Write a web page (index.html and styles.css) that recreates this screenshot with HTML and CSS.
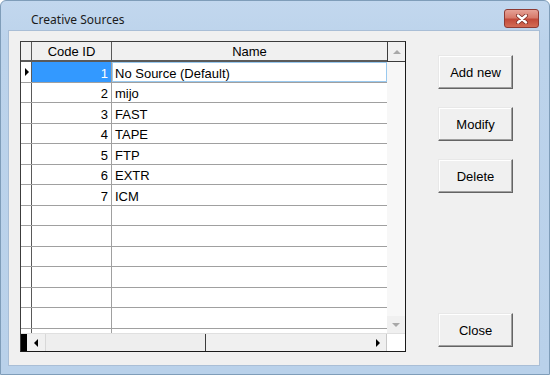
FILE: index.html
```html
<!DOCTYPE html>
<html lang="en">
<head>
    <meta charset="UTF-8">
    <title>Creative Sources</title>
    <link rel="stylesheet" href="styles.css">
</head>
<body>
    <div class="window">
        <div class="titlebar">
            <span class="title">Creative Sources</span>
            <div class="close-x">
                <svg width="14" height="10" viewBox="0 0 14 10">
                    <path d="M3 1.5 L11 8.5 M11 1.5 L3 8.5" stroke="#7a2a22" stroke-width="4" stroke-linecap="round"/>
                    <path d="M3 1.5 L11 8.5 M11 1.5 L3 8.5" stroke="#ffffff" stroke-width="2.4" stroke-linecap="round"/>
                </svg>
            </div>
        </div>
        <div class="client">
            <div class="grid">
                <div class="grid-main">
                    <div class="grid-view">
                        <div class="row header">
                            <div class="sel"></div>
                            <div class="cell code">Code ID</div>
                            <div class="cell name">Name</div>
                        </div>
                        <div class="rows">
                            <div class="row current">
                                <div class="sel"><span class="arrow"></span></div>
                                <div class="cell code">1</div>
                                <div class="cell name">No Source (Default)</div>
                            </div>
                            <div class="row"><div class="sel"></div><div class="cell code">2</div><div class="cell name">mijo</div></div>
                            <div class="row"><div class="sel"></div><div class="cell code">3</div><div class="cell name">FAST</div></div>
                            <div class="row"><div class="sel"></div><div class="cell code">4</div><div class="cell name">TAPE</div></div>
                            <div class="row"><div class="sel"></div><div class="cell code">5</div><div class="cell name">FTP</div></div>
                            <div class="row"><div class="sel"></div><div class="cell code">6</div><div class="cell name">EXTR</div></div>
                            <div class="row"><div class="sel"></div><div class="cell code">7</div><div class="cell name">ICM</div></div>
                            <div class="row"><div class="sel"></div><div class="cell code"></div><div class="cell name"></div></div>
                            <div class="row"><div class="sel"></div><div class="cell code"></div><div class="cell name"></div></div>
                            <div class="row"><div class="sel"></div><div class="cell code"></div><div class="cell name"></div></div>
                            <div class="row"><div class="sel"></div><div class="cell code"></div><div class="cell name"></div></div>
                            <div class="row"><div class="sel"></div><div class="cell code"></div><div class="cell name"></div></div>
                            <div class="row"><div class="sel"></div><div class="cell code"></div><div class="cell name"></div></div>
                            <div class="row"><div class="sel"></div><div class="cell code"></div><div class="cell name"></div></div>
                        </div>
                    </div>
                    <div class="vscroll">
                        <div class="sb-btn up"><span class="tri-up"></span></div>
                        <div class="sb-track"></div>
                        <div class="sb-btn down"><span class="tri-down"></span></div>
                    </div>
                </div>
                <div class="hscroll">
                    <div class="corner-left"></div>
                    <div class="sb-btn left"><span class="tri-left"></span></div>
                    <div class="h-track"><div class="thumb"></div></div>
                    <div class="sb-btn right"><span class="tri-right"></span></div>
                    <div class="corner-right"></div>
                </div>
            </div>
            <div class="actions">
                <button class="button">Add new</button>
                <button class="button">Modify</button>
                <button class="button">Delete</button>
                <button class="button close">Close</button>
            </div>
        </div>
    </div>
</body>
</html>
```

FILE: styles.css
```css
body {
    margin: 0;
    background-color: #ffffff;
    font-family: 'Liberation Sans', Arial, sans-serif;
    font-size: 13px;
    color: #000000;
}
.window {
    width: 550px;
    height: 375px;
    box-sizing: border-box;
    border: 1px solid #7f9db9;
    border-radius: 6px 6px 0 0;
    background: linear-gradient(to bottom, #c2d7ee 0, #bcd3eb 40px, #b9d1ea 100%);
    padding: 0 9px 8px 7px;
    display: flex;
    flex-direction: column;
}
.titlebar {
    height: 31px;
    display: flex;
    align-items: flex-start;
    justify-content: space-between;
    margin-right: 1px;
    margin-left: 23px;
}
.title {
    font-family: 'Noto Sans', 'Open Sans', sans-serif;
    font-size: 12px;
    color: #1b1b1b;
    margin-top: 10px;
}
.close-x {
    width: 33px;
    height: 17px;
    margin-top: 8px;
    border: 1px solid #8e3a33;
    border-radius: 3px;
    background: linear-gradient(to bottom, #e6a297 0, #d77a6b 45%, #c24a3a 55%, #d36c55 100%);
    display: flex;
    align-items: center;
    justify-content: center;
}
.client {
    flex: 1;
    background-color: #f0f0f0;
    border: 1px solid #a9bed6;
    display: flex;
    padding: 10px 0 0 11px;
}
.grid {
    width: 386px;
    height: 311px;
    box-sizing: border-box;
    border: 1px solid #1a1a1a;
    border-top-color: #3c3c3c;
    border-left-color: #3c3c3c;
    display: flex;
    flex-direction: column;
    background-color: #ffffff;
}
.grid-main {
    flex: 1;
    display: flex;
    min-height: 0;
}
.grid-view {
    width: 366px;
    display: flex;
    flex-direction: column;
    overflow: hidden;
}
.rows {
    flex: 1;
    overflow: hidden;
}
.row {
    display: flex;
    height: 20.5px;
    box-sizing: border-box;
    border-bottom: 1px solid #a0a0a0;
}
.row .sel {
    width: 11px;
    box-sizing: border-box;
    border-right: 1px solid #5a5a5a;
    display: flex;
    align-items: center;
    justify-content: center;
}
.cell {
    box-sizing: border-box;
    display: flex;
    align-items: center;
    padding-top: 3px;
    white-space: nowrap;
}
.cell.code {
    width: 80px;
    border-right: 1px solid #a0a0a0;
    justify-content: flex-end;
    padding-right: 3px;
}
.cell.name {
    width: 275px;
    padding-left: 3px;
}
.row.header {
    height: 20px;
    background-color: #f0f0f0;
    border-bottom: 2px solid #5a5a5a;
}
.row.header .cell {
    justify-content: center;
    padding: 0;
}
.row.header .cell.code {
    border-right: 1px solid #5a5a5a;
}
.row.current .cell.code {
    background-color: #3399ff;
    color: #ffffff;
}
.row.current .cell.name {
    border: 1px solid #99c9ef;
    padding-left: 2px;
}
.arrow {
    width: 0;
    height: 0;
    border-top: 4px solid transparent;
    border-bottom: 4px solid transparent;
    border-left: 4px solid #000000;
    margin-left: 1px;
}
.vscroll {
    width: 18px;
    display: flex;
    flex-direction: column;
    background-color: #f7f7f7;
}
.sb-btn {
    display: flex;
    align-items: center;
    justify-content: center;
    box-sizing: border-box;
    background-color: #f0f0f0;
}
.sb-btn.up {
    height: 20px;
    border: 1px solid #3c3c3c;
    border-top: none;
    border-right: none;
}
.sb-btn.down {
    height: 17px;
}
.sb-track {
    flex: 1;
}
.tri-up, .tri-down, .tri-left, .tri-right {
    width: 0;
    height: 0;
}
.tri-up {
    border-left: 4px solid transparent;
    border-right: 4px solid transparent;
    border-bottom: 4px solid #a8a8a8;
}
.tri-down {
    border-left: 4px solid transparent;
    border-right: 4px solid transparent;
    border-top: 4px solid #a8a8a8;
}
.tri-left {
    border-top: 4px solid transparent;
    border-bottom: 4px solid transparent;
    border-right: 4px solid #000000;
}
.tri-right {
    border-top: 4px solid transparent;
    border-bottom: 4px solid transparent;
    border-left: 4px solid #000000;
}
.hscroll {
    height: 18px;
    display: flex;
    background-color: #f0f0f0;
    border-top: 1px solid #e0e0e0;
    box-sizing: border-box;
}
.corner-left {
    width: 6px;
    background-color: #000000;
}
.sb-btn.left {
    width: 17px;
}
.sb-btn.right {
    width: 17px;
}
.h-track {
    flex: 1;
    display: flex;
    padding-left: 1px;
}
.thumb {
    width: 161px;
    box-sizing: border-box;
    border-right: 1px solid #3c3c3c;
    border-left: 1px solid #d8d8d8;
    background-color: #eeeeee;
}
.corner-right {
    width: 18px;
    background-color: #ffffff;
    border-left: 1px solid #c8c8c8;
}
.actions {
    display: flex;
    flex-direction: column;
    margin-left: 32px;
    padding-top: 14px;
}
.button {
    width: 75px;
    height: 34px;
    margin-bottom: 18px;
    background-color: #f0f0f0;
    font-family: 'Liberation Sans', Arial, sans-serif;
    font-size: 13px;
    color: #000000;
    border: 1px solid;
    border-color: #e8e8e8 #646464 #646464 #e8e8e8;
    box-shadow: inset -1px -1px #a0a0a0, inset 1px 1px #ffffff;
    padding: 0;
}
.button.close {
    margin-top: 102px;
}
```
